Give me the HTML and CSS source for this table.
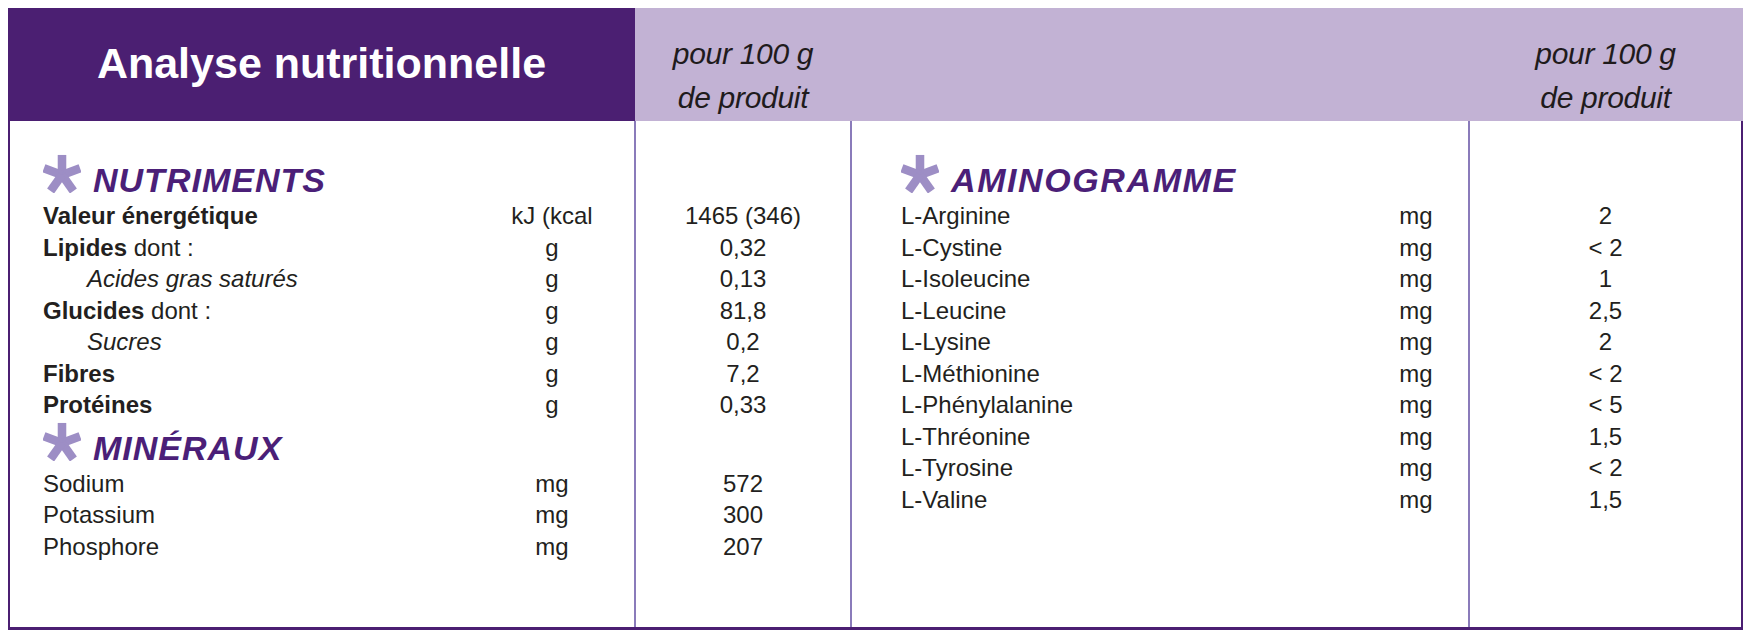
FILE: index.html
```html
<!DOCTYPE html>
<html lang="fr">
<head>
<meta charset="utf-8">
<title>Analyse nutritionnelle</title>
<link rel="stylesheet" href="styles.css">
</head>
<body>
<div class="panel">
  <div class="head">
    <div class="head-title">Analyse nutritionnelle</div>
    <div class="head-per">pour 100 g<br>de produit</div>
    <div class="head-gap"></div>
    <div class="head-per">pour 100 g<br>de produit</div>
  </div>
  <div class="body">
    <div class="main main-left">
      <div class="heading"><svg class="star" viewBox="-20 -20 40 40"><g><line x1="0" y1="2" x2="0" y2="-19"/><line x1="0" y1="2" x2="19" y2="-5"/><line x1="0" y1="2" x2="-19" y2="-5"/><line x1="0" y1="2" x2="12" y2="19"/><line x1="0" y1="2" x2="-12" y2="19"/></g></svg><span>NUTRIMENTS</span></div>
      <div class="row"><span class="label"><b>Valeur énergétique</b></span><span class="unit">kJ (kcal</span></div>
      <div class="row"><span class="label"><b>Lipides</b> dont :</span><span class="unit">g</span></div>
      <div class="row"><span class="label sub">Acides gras saturés</span><span class="unit">g</span></div>
      <div class="row"><span class="label"><b>Glucides</b> dont :</span><span class="unit">g</span></div>
      <div class="row"><span class="label sub">Sucres</span><span class="unit">g</span></div>
      <div class="row"><span class="label"><b>Fibres</b></span><span class="unit">g</span></div>
      <div class="row"><span class="label"><b>Protéines</b></span><span class="unit">g</span></div>
      <div class="heading heading-next"><svg class="star" viewBox="-20 -20 40 40"><g><line x1="0" y1="2" x2="0" y2="-19"/><line x1="0" y1="2" x2="19" y2="-5"/><line x1="0" y1="2" x2="-19" y2="-5"/><line x1="0" y1="2" x2="12" y2="19"/><line x1="0" y1="2" x2="-12" y2="19"/></g></svg><span>MINÉRAUX</span></div>
      <div class="row"><span class="label">Sodium</span><span class="unit">mg</span></div>
      <div class="row"><span class="label">Potassium</span><span class="unit">mg</span></div>
      <div class="row"><span class="label">Phosphore</span><span class="unit">mg</span></div>
    </div>
    <div class="values values-left">
      <div class="spacer"></div>
      <div class="val">1465 (346)</div>
      <div class="val">0,32</div>
      <div class="val">0,13</div>
      <div class="val">81,8</div>
      <div class="val">0,2</div>
      <div class="val">7,2</div>
      <div class="val">0,33</div>
      <div class="spacer spacer-next"></div>
      <div class="val">572</div>
      <div class="val">300</div>
      <div class="val">207</div>
    </div>
    <div class="main main-right">
      <div class="heading"><svg class="star" viewBox="-20 -20 40 40"><g><line x1="0" y1="2" x2="0" y2="-19"/><line x1="0" y1="2" x2="19" y2="-5"/><line x1="0" y1="2" x2="-19" y2="-5"/><line x1="0" y1="2" x2="12" y2="19"/><line x1="0" y1="2" x2="-12" y2="19"/></g></svg><span class="wide">AMINOGRAMME</span></div>
      <div class="row"><span class="label">L-Arginine</span><span class="unit">mg</span></div>
      <div class="row"><span class="label">L-Cystine</span><span class="unit">mg</span></div>
      <div class="row"><span class="label">L-Isoleucine</span><span class="unit">mg</span></div>
      <div class="row"><span class="label">L-Leucine</span><span class="unit">mg</span></div>
      <div class="row"><span class="label">L-Lysine</span><span class="unit">mg</span></div>
      <div class="row"><span class="label">L-Méthionine</span><span class="unit">mg</span></div>
      <div class="row"><span class="label">L-Phénylalanine</span><span class="unit">mg</span></div>
      <div class="row"><span class="label">L-Thréonine</span><span class="unit">mg</span></div>
      <div class="row"><span class="label">L-Tyrosine</span><span class="unit">mg</span></div>
      <div class="row"><span class="label">L-Valine</span><span class="unit">mg</span></div>
    </div>
    <div class="values values-right">
      <div class="spacer"></div>
      <div class="val">2</div>
      <div class="val">&lt; 2</div>
      <div class="val">1</div>
      <div class="val">2,5</div>
      <div class="val">2</div>
      <div class="val">&lt; 2</div>
      <div class="val">&lt; 5</div>
      <div class="val">1,5</div>
      <div class="val">&lt; 2</div>
      <div class="val">1,5</div>
    </div>
  </div>
</div>
</body>
</html>
```
FILE: styles.css
```css
* { box-sizing: border-box; }

html, body {
  margin: 0;
  padding: 0;
  background: #ffffff;
}

body {
  font-family: "Liberation Sans", Arial, sans-serif;
  color: #231f20;
}

.panel {
  margin: 8px;
  width: 1735px;
  height: 622px;
  display: flex;
  flex-direction: column;
}

/* ---------- header ---------- */
.head {
  height: 113px;
  display: grid;
  grid-template-columns: 627px 216px 617px 275px;
  background: #c2b2d4;
}

.head-title {
  background: #4b1f72;
  color: #ffffff;
  font-weight: bold;
  font-size: 43px;
  display: flex;
  align-items: center;
  justify-content: center;
  padding-bottom: 2px;
}

.head-per {
  font-style: italic;
  font-size: 30px;
  line-height: 44px;
  text-align: center;
  padding-top: 24px;
  color: #1f1b1c;
  letter-spacing: -0.3px;
}

/* ---------- body ---------- */
.body {
  flex: 1;
  display: grid;
  grid-template-columns: 624px 216px 618px 273px;
  border-left: 2px solid #4b1f72;
  border-right: 2px solid #4b1f72;
  border-bottom: 3px solid #4b1f72;
  font-size: 24px;
}

.main,
.values {
  padding-top: 40px;
  display: flex;
  flex-direction: column;
}

.values,
.main-right {
  border-left: 2px solid #8a7bba;
}

.main-left { padding-left: 33px; padding-right: 32px; }
.main-right { padding-left: 49px; padding-right: 2px; }

.heading {
  height: 39px;
  flex: none;
  display: flex;
  align-items: flex-end;
  font-size: 34px;
  line-height: 39px;
  font-weight: bold;
  font-style: italic;
  letter-spacing: 1px;
  color: #4b1f78;
}

.heading .wide { letter-spacing: 1.6px; }

.heading-next { margin-top: 8px; }

.star {
  width: 38px;
  height: 40px;
  margin-right: 12px;
  margin-bottom: 7px;
  flex: none;
}

.star g {
  stroke: #9d8ec5;
  stroke-width: 9;
  stroke-linecap: butt;
}

.row {
  height: 31.5px;
  flex: none;
  line-height: 31.5px;
  display: grid;
  grid-template-columns: 1fr 100px;
  white-space: nowrap;
}

.label b { font-weight: bold; }

.label.sub {
  font-style: italic;
  padding-left: 44px;
}

.unit { text-align: center; }

.spacer { height: 39px; flex: none; }
.spacer-next { height: 47px; }

.val {
  height: 31.5px;
  flex: none;
  line-height: 31.5px;
  text-align: center;
  white-space: nowrap;
}
```
